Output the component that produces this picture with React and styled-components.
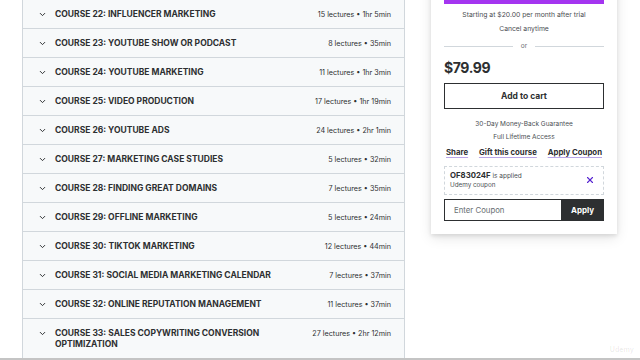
import styled, { createGlobalStyle } from 'styled-components';
import { ChevronDown, X } from 'lucide-react';

const GlobalStyle = createGlobalStyle`
  html, body {
    margin: 0;
    padding: 0;
    background: #ffffff;
    font-family: Inter, "Noto Sans", "Liberation Sans", sans-serif;
    color: #2d2f31;
  }
  * { box-sizing: border-box; }
`;

const courses = [
  { title: 'Course 22: Influencer Marketing', lectures: 15, length: '1hr 5min' },
  { title: 'Course 23: YouTube Show or Podcast', lectures: 8, length: '35min' },
  { title: 'Course 24: YouTube Marketing', lectures: 11, length: '1hr 3min' },
  { title: 'Course 25: Video Production', lectures: 17, length: '1hr 19min' },
  { title: 'Course 26: YouTube Ads', lectures: 24, length: '2hr 1min' },
  { title: 'Course 27: Marketing Case Studies', lectures: 5, length: '32min' },
  { title: 'Course 28: Finding Great Domains', lectures: 7, length: '35min' },
  { title: 'Course 29: Offline Marketing', lectures: 5, length: '24min' },
  { title: 'Course 30: TikTok Marketing', lectures: 12, length: '44min' },
  { title: 'Course 31: Social Media Marketing Calendar', lectures: 7, length: '37min' },
  { title: 'Course 32: Online Reputation Management', lectures: 11, length: '37min' },
  { title: 'Course 33: Sales Copywriting Conversion Optimization', lectures: 27, length: '2hr 12min' },
];

const App = () => {
  return (
    <>
      <GlobalStyle />
      <Page>
        <Curriculum>
          {courses.map((c) => (
            <SectionRow key={c.title}>
              <Chevron>
                <ChevronDown size={9} strokeWidth={2.6} />
              </Chevron>
              <SectionTitle>{c.title}</SectionTitle>
              <SectionMeta>
                {c.lectures} lectures • {c.length}
              </SectionMeta>
            </SectionRow>
          ))}
        </Curriculum>

        <Sidebar>
          <Card>
            <SubscribeButton />
            <SmallNote>Starting at $20.00 per month after trial</SmallNote>
            <SmallNote $top={5}>Cancel anytime</SmallNote>
            <OrDivider>
              <Line />
              <span>or</span>
              <Line />
            </OrDivider>
            <Price>$79.99</Price>
            <CartButton>Add to cart</CartButton>
            <TinyNote $top={11}>30-Day Money-Back Guarantee</TinyNote>
            <TinyNote $top={4}>Full Lifetime Access</TinyNote>
            <LinkRow>
              <TextLink>Share</TextLink>
              <TextLink>Gift this course</TextLink>
              <TextLink>Apply Coupon</TextLink>
            </LinkRow>
            <CouponBox>
              <CouponInfo>
                <CouponLine>
                  <strong>OF83024F</strong> is applied
                </CouponLine>
                <CouponSub>Udemy coupon</CouponSub>
              </CouponInfo>
              <RemoveCoupon>
                <X size={10} strokeWidth={2.6} />
              </RemoveCoupon>
            </CouponBox>
            <CouponForm>
              <CouponInput placeholder="Enter Coupon" />
              <ApplyButton>Apply</ApplyButton>
            </CouponForm>
          </Card>
        </Sidebar>

        <Watermark>Udemy</Watermark>
      </Page>
    </>
  );
};

const Page = styled.div`
  position: relative;
  width: 640px;
  height: 360px;
  overflow: hidden;
  display: flex;
  align-items: flex-start;
  padding-left: 22px;
  gap: 26px;
  border-bottom: 2px solid #c4c4c4;
`;

const Curriculum = styled.div`
  width: 383px;
  flex-shrink: 0;
  border-left: 1px solid #d1d7dc;
  border-right: 1px solid #d1d7dc;
`;

const SectionRow = styled.div`
  display: flex;
  align-items: flex-start;
  gap: 16px;
  min-height: 28.8px;
  padding: 9px 13px 8px 15px;
  background: #f7f9fa;
  border-bottom: 1px solid #d1d7dc;
`;

const Chevron = styled.span`
  display: flex;
  align-items: center;
  height: 11px;
  margin-right: -8px;
  color: #2d2f31;
`;

const SectionTitle = styled.div`
  flex: 1;
  font-size: 8.5px;
  font-weight: 700;
  line-height: 11px;
  text-transform: uppercase;
  color: #2d2f31;
`;

const SectionMeta = styled.div`
  font-size: 7.2px;
  line-height: 11px;
  white-space: nowrap;
  color: #2d2f31;
`;

const Sidebar = styled.div`
  width: 186px;
  flex-shrink: 0;
  margin-top: -33px;
`;

const Card = styled.div`
  display: flex;
  flex-direction: column;
  align-items: stretch;
  background: #ffffff;
  padding: 13px 13px 13px;
  box-shadow: 0 2px 4px rgba(0, 0, 0, 0.1), 0 4px 12px rgba(0, 0, 0, 0.1);
`;

const SubscribeButton = styled.div`
  height: 24px;
  background: #a435f0;
`;

const SmallNote = styled.div`
  margin-top: ${(p) => p.$top ?? 6}px;
  font-size: 6.8px;
  line-height: 9px;
  text-align: center;
  color: #4a4e52;
`;

const TinyNote = styled(SmallNote)`
  font-size: 6.5px;
`;

const OrDivider = styled.div`
  display: flex;
  align-items: center;
  gap: 8px;
  margin-top: 9px;
  font-size: 6.5px;
  color: #6a6f73;
`;

const Line = styled.div`
  flex: 1;
  height: 1px;
  background: #d1d7dc;
`;

const Price = styled.div`
  margin-top: 9px;
  font-size: 14px;
  font-weight: 700;
  letter-spacing: -0.4px;
  line-height: 18px;
  color: #2d2f31;
`;

const CartButton = styled.button`
  margin-top: 6px;
  height: 26px;
  border: 1px solid #2d2f31;
  background: #ffffff;
  font-family: inherit;
  font-size: 8.5px;
  font-weight: 700;
  color: #2d2f31;
  cursor: pointer;
`;

const LinkRow = styled.div`
  display: flex;
  justify-content: space-between;
  padding: 0 2px;
  margin-top: 5px;
`;

const TextLink = styled.a`
  font-size: 7.8px;
  font-weight: 700;
  line-height: 11px;
  color: #2d2f31;
  text-decoration: underline;
  text-decoration-color: #b9a6e8;
  text-underline-offset: 2px;
  cursor: pointer;
`;

const CouponBox = styled.div`
  display: flex;
  align-items: center;
  justify-content: space-between;
  margin-top: 8px;
  padding: 3px 8px 4px 5px;
  border: 1px dashed #d1d7dc;
`;

const CouponInfo = styled.div`
  display: flex;
  flex-direction: column;
`;

const CouponLine = styled.div`
  font-size: 6.5px;
  line-height: 10px;
  color: #4a4e52;

  strong {
    font-size: 7.8px;
    font-weight: 700;
    color: #2d2f31;
  }
`;

const CouponSub = styled.div`
  font-size: 6.3px;
  line-height: 9px;
  color: #4a4e52;
`;

const RemoveCoupon = styled.span`
  display: flex;
  color: #5624d0;
`;

const CouponForm = styled.div`
  display: flex;
  margin-top: 4px;
  height: 22px;
`;

const CouponInput = styled.input`
  flex: 1;
  min-width: 0;
  border: 1px solid #2d2f31;
  border-right: none;
  padding: 0 9px;
  font-family: inherit;
  font-size: 7.8px;
  color: #2d2f31;
  outline: none;

  &::placeholder {
    color: #6a6f73;
  }
`;

const ApplyButton = styled.button`
  width: 43px;
  border: none;
  background: #2d2f31;
  color: #ffffff;
  font-family: inherit;
  font-size: 8px;
  font-weight: 700;
  cursor: pointer;
`;

const Watermark = styled.div`
  position: absolute;
  right: 6px;
  bottom: 4px;
  font-size: 7px;
  font-weight: 700;
  color: rgba(0, 0, 0, 0.08);
`;

export default App;
